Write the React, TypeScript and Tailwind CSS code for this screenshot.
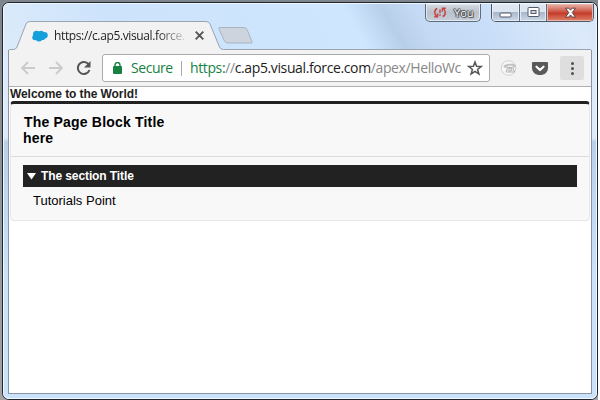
import React from "react";

const ui = "font-['Open_Sans','Noto_Sans',sans-serif]";
const arial = "font-['Liberation_Sans',Arial,sans-serif]";

function WindowControls() {
  return (
    <div className="absolute right-[2px] top-0 flex items-start">
      <div className="mr-[10px] flex h-[18px] w-[56px] items-center rounded-b-[5px] border border-t-0 border-[#5f6a7a] bg-linear-to-b from-[#d5dae2] via-[#bac1cc] to-[#c5cedb] shadow-[inset_0_0_0_1px_#e3e9f1]">
        <svg className="ml-[7px]" width="14" height="13" viewBox="0 0 14 13" fill="none" stroke="#c5453f" strokeWidth="1.5">
          <path d="M4.300 2.500C1 3.500 1 8.500 3.800 10.300M1.200 10.800h3.400V7.500" />
          <path d="M9.700 10.500C13 9.500 13 4.500 10.200 2.500M12.800 2.200H9.400v3.300" />
          <path d="M7 3.500v3.500M7 8.200v1.500" />
        </svg>
        <span className={`${ui} ml-[7px] text-[11px] leading-none text-white [text-shadow:0_0_1px_#333,0_0_1px_#333,1px_1px_1px_#444,-1px_0_1px_#555,0_-1px_1px_#555]`}>You</span>
      </div>
      <div className="flex h-[18px] w-[103px] overflow-hidden rounded-b-[5px] border border-t-0 border-[#4d5969]">
        <div className="flex w-[28px] items-center justify-center border-r border-[#5f6c7d] bg-linear-to-b from-[#dce5f0] from-45% via-[#a9b8ca] via-50% to-[#cbd9e9] shadow-[inset_0_0_0_1px_#e4edf7]">
          <svg width="13" height="6" className="mt-[4px]"><rect x="1" y="1" width="11" height="4" rx="1" fill="#fff" stroke="#545b68" /></svg>
        </div>
        <div className="flex w-[27px] items-center justify-center border-r border-[#5f6c7d] bg-linear-to-b from-[#dce5f0] from-45% via-[#a9b8ca] via-50% to-[#cbd9e9] shadow-[inset_0_0_0_1px_#e4edf7]">
          <svg width="13" height="11"><rect x="1" y=".5" width="11" height="9" rx="1" fill="#fff" stroke="#545b68" /><rect x="4" y="3.5" width="5" height="3" fill="#ced8e4" stroke="#545b68" /></svg>
        </div>
        <div className="flex flex-1 items-center justify-center bg-linear-to-b from-[#e1a195] from-10% via-[#c43b2a] via-55% to-[#df8068] shadow-[inset_0_0_0_1px_#eab5a7]">
          <svg width="13" height="12" viewBox="0 0 13 12" fill="#fff" stroke="#5d4549" strokeWidth="1">
            <path d="M1.500 1.200h3.200l1.800 2 1.800-2h3.200L8.200 5.600l3.300 4.500H8.300l-1.800-2.200-1.800 2.200H1.500l3.300-4.500z" />
          </svg>
        </div>
      </div>
    </div>
  );
}

function TabStrip() {
  return (
    <div className="relative -mx-[4px] h-[46px] shrink-0 rounded-t-[5px] bg-[linear-gradient(60deg,#dcebfa_0,#cde3fc_20%,#cfe6ff_59%,#b8cfea_65%,#c4d9f3_70%,#c9def8_80%,#dceafa_94%,#d6e6f8_100%)] px-[4px]">
      <WindowControls />
      <div className="flex pt-[17px]">
        <div className="relative h-[29px] w-[217px] shrink-0">
          <svg className="absolute inset-0" width="583" height="29" fill="none">
            <path d="M1 29v-.5h4q3 0 4-2.500L18 3q1-2.500 4-2.500h176q3 0 4 2.500l9.500 23q1 2.500 4 2.500V29z" fill="#f2f2f2" />
            <path d="M1 28.500h4q3 0 4-2.500L18 3q1-2.500 4-2.500h176q3 0 4 2.500l9.500 23q1 2.500 4 2.500H583" stroke="#99a3b2" />
          </svg>
          <div className="relative flex h-[29px] items-center pl-[24px]">
            <svg width="16" height="12" viewBox="0 0 16 12" fill="#159fdc">
              <circle cx="4.500" cy="4.300" r="3.500" /><circle cx="9" cy="3.700" r="3" /><circle cx="12.400" cy="5.300" r="3.300" /><circle cx="3" cy="7.500" r="2.700" /><circle cx="7" cy="8.300" r="3.300" /><circle cx="10.500" cy="7.300" r="2.800" />
            </svg>
            <span className={`${ui} ml-[6px] w-[132px] whitespace-nowrap text-[12px] leading-[18px] tracking-[-0.37px] text-[#222] [mask-image:linear-gradient(90deg,#000_78%,transparent_102%)]`}>https://c.ap5.visual.force.</span>
            <svg className="ml-[9px]" width="9" height="9" stroke="#555" strokeWidth="1.900"><path d="M.7 .7l7.600 7.600M8.300 .7L.7 8.300" /></svg>
          </div>
        </div>
        <svg className="-ml-[8px] mt-[5px]" width="36" height="19">
          <path d="M3 1.500h24q2 0 3 2l5 12q.5 1.500-1 1.500H11q-2.500 0-3.500-2L2 3Q1.500 1.500 3 1.500z" fill="#cdd4de" stroke="#a9b3c2" />
        </svg>
      </div>
    </div>
  );
}

function Toolbar() {
  return (
    <div className="flex h-[37px] shrink-0 items-center border-b border-[#b0b0b0] bg-[#f2f2f2]">
      <svg className="ml-[11px] shrink-0" width="16" height="16" fill="none" stroke="#cbcbcb" strokeWidth="1.800"><path d="M15 8H2M8 2L2 8l6 6" /></svg>
      <svg className="ml-[12px] shrink-0" width="16" height="16" fill="none" stroke="#cbcbcb" strokeWidth="1.800"><path d="M1 8h13M8 2l6 6-6 6" /></svg>
      <svg className="ml-[12px] shrink-0" width="16" height="16" fill="none" stroke="#555" strokeWidth="2"><path d="M13.500 10A6 6 0 1 1 11.800 3.400L13.500 5" /><path d="M14.500 1v6.500H8z" fill="#555" stroke="none" /></svg>
      <div className={`${ui} ml-[10px] flex h-[28px] w-[388px] shrink-0 items-center rounded-[3px] border border-[#aaa] bg-white text-[14px] leading-[20px]`}>
        <svg className="ml-[10px]" width="9" height="12" fill="none"><path d="M2 5V3a2.500 2.500 0 0 1 5 0v2" stroke="#168141" strokeWidth="1.400" /><rect y="4" width="9" height="8" rx="1" fill="#168141" /></svg>
        <span className="ml-[9px] w-[42px] whitespace-nowrap tracking-[-0.45px] text-[#168141]">Secure</span>
        <span className="ml-[8px] h-[15px] w-px bg-[#aaa]" />
        <span className="ml-[8px] w-[274px] whitespace-nowrap tracking-[-0.38px] text-[#888]"><span className="text-[#168141]">https:</span>//<span className="text-[#1d1d1d]">c.ap5.visual.force.com</span>/apex/HelloWc</span>
        <svg className="ml-[3px] shrink-0" width="16" height="16" viewBox="0 0 16 16" fill="none" stroke="#555" strokeWidth="1.500"><path d="M8 2l1.600 4.200 4.700.2-3.700 3 1.300 4.500L8 11.300l-3.900 2.600 1.300-4.500-3.700-3 4.700-.2z" /></svg>
      </div>
      <svg className="ml-[10px] shrink-0" width="18" height="18" viewBox="0 0 18 18" fill="none">
        <circle cx="8.500" cy="9" r="7.300" fill="#f7f7f7" stroke="#d0d0d0" />
        <path d="M3.500 7.300C4 4.800 14.500 3.500 16 6.500l-.3 1.700-2.500.2-.7-1.600H8l-.7 1.800-3.300.2z" fill="#c2c2c2" />
        <path d="M7.500 8.500h5.200l2 4.500H6z" fill="#eee" stroke="#b4b4b4" />
        <circle cx="10.200" cy="10.500" r="1.500" stroke="#aaa" />
      </svg>
      <svg className="ml-[14px] shrink-0" width="16" height="15"><path d="M1 1h14q1 0 1 1v4.500C16 11.500 12.500 14 8 14S0 11.500 0 6.500V2q0-1 1-1z" fill="#5a5a5a" /><path d="M4.500 5.700L8 9l3.500-3.300" fill="none" stroke="#fff" strokeWidth="2.200" strokeLinecap="round" strokeLinejoin="round" /></svg>
      <div className="ml-[12px] flex h-[24px] w-[24px] shrink-0 flex-col items-center justify-center gap-[2px] rounded-[2px] bg-[#dedede]">
        <i className="h-[3px] w-[3px] rounded-full bg-[#505050]" /><i className="h-[3px] w-[3px] rounded-full bg-[#505050]" /><i className="h-[3px] w-[3px] rounded-full bg-[#505050]" />
      </div>
    </div>
  );
}

function Page() {
  return (
    <div className={`${arial} min-h-0 flex-1 bg-white pr-px text-black`}>
      <div className="h-[14px] whitespace-nowrap pl-px text-[12px] font-bold leading-[14px] tracking-[-0.08px] text-[#222]">Welcome to the World!</div>
      <div className="ml-px h-[120px] rounded-[4px] border border-t-[3px] border-[#e8e8e8] border-t-[#222] bg-[#f8f8f8]">
        <div className="h-[53px] border-b border-[#dbdbdb] pl-[13px] pt-[10px] text-[14px] font-bold leading-[16px] tracking-[0.19px]">The Page Block Title<br /><span className="-ml-px">here</span></div>
        <div className="ml-[12px] mr-[12px] mt-[8px] flex h-[22px] items-center bg-[#222] pl-[4px] text-[12px] font-bold tracking-[-0.1px] text-white">
          <svg width="9" height="7" fill="#fff"><path d="M0 0h9L4.500 6.500z" /></svg>
          <span className="ml-[5px]">The section Title</span>
        </div>
        <div className="pl-[22px] pt-[6px] text-[13px] leading-[16px]">Tutorials Point</div>
      </div>
    </div>
  );
}

export default function App() {
  return (
    <div className="h-[400px] w-[600px] overflow-hidden bg-white">
      <div className="h-[400px] w-[598px] bg-linear-to-b from-[#7f858c] to-[#a3a3a3] pl-[2px] pt-[2px]">
        <div className="h-[398px] w-[596px] rounded-[7px] border border-[#20262e] bg-[#cfe4fb]">
          <div className="flex h-[396px] flex-col rounded-[6px] border border-[#eff8ff] bg-linear-to-b from-[#dceafa] from-34% via-[#b9d0ea] via-35% to-[#cbe2fb] to-70% px-[4px]">
            <TabStrip />
            <div className="flex h-[344px] flex-col border border-t-0 border-[#8995a5] bg-white">
              <Toolbar />
              <Page />
            </div>
          </div>
        </div>
      </div>
    </div>
  );
}
